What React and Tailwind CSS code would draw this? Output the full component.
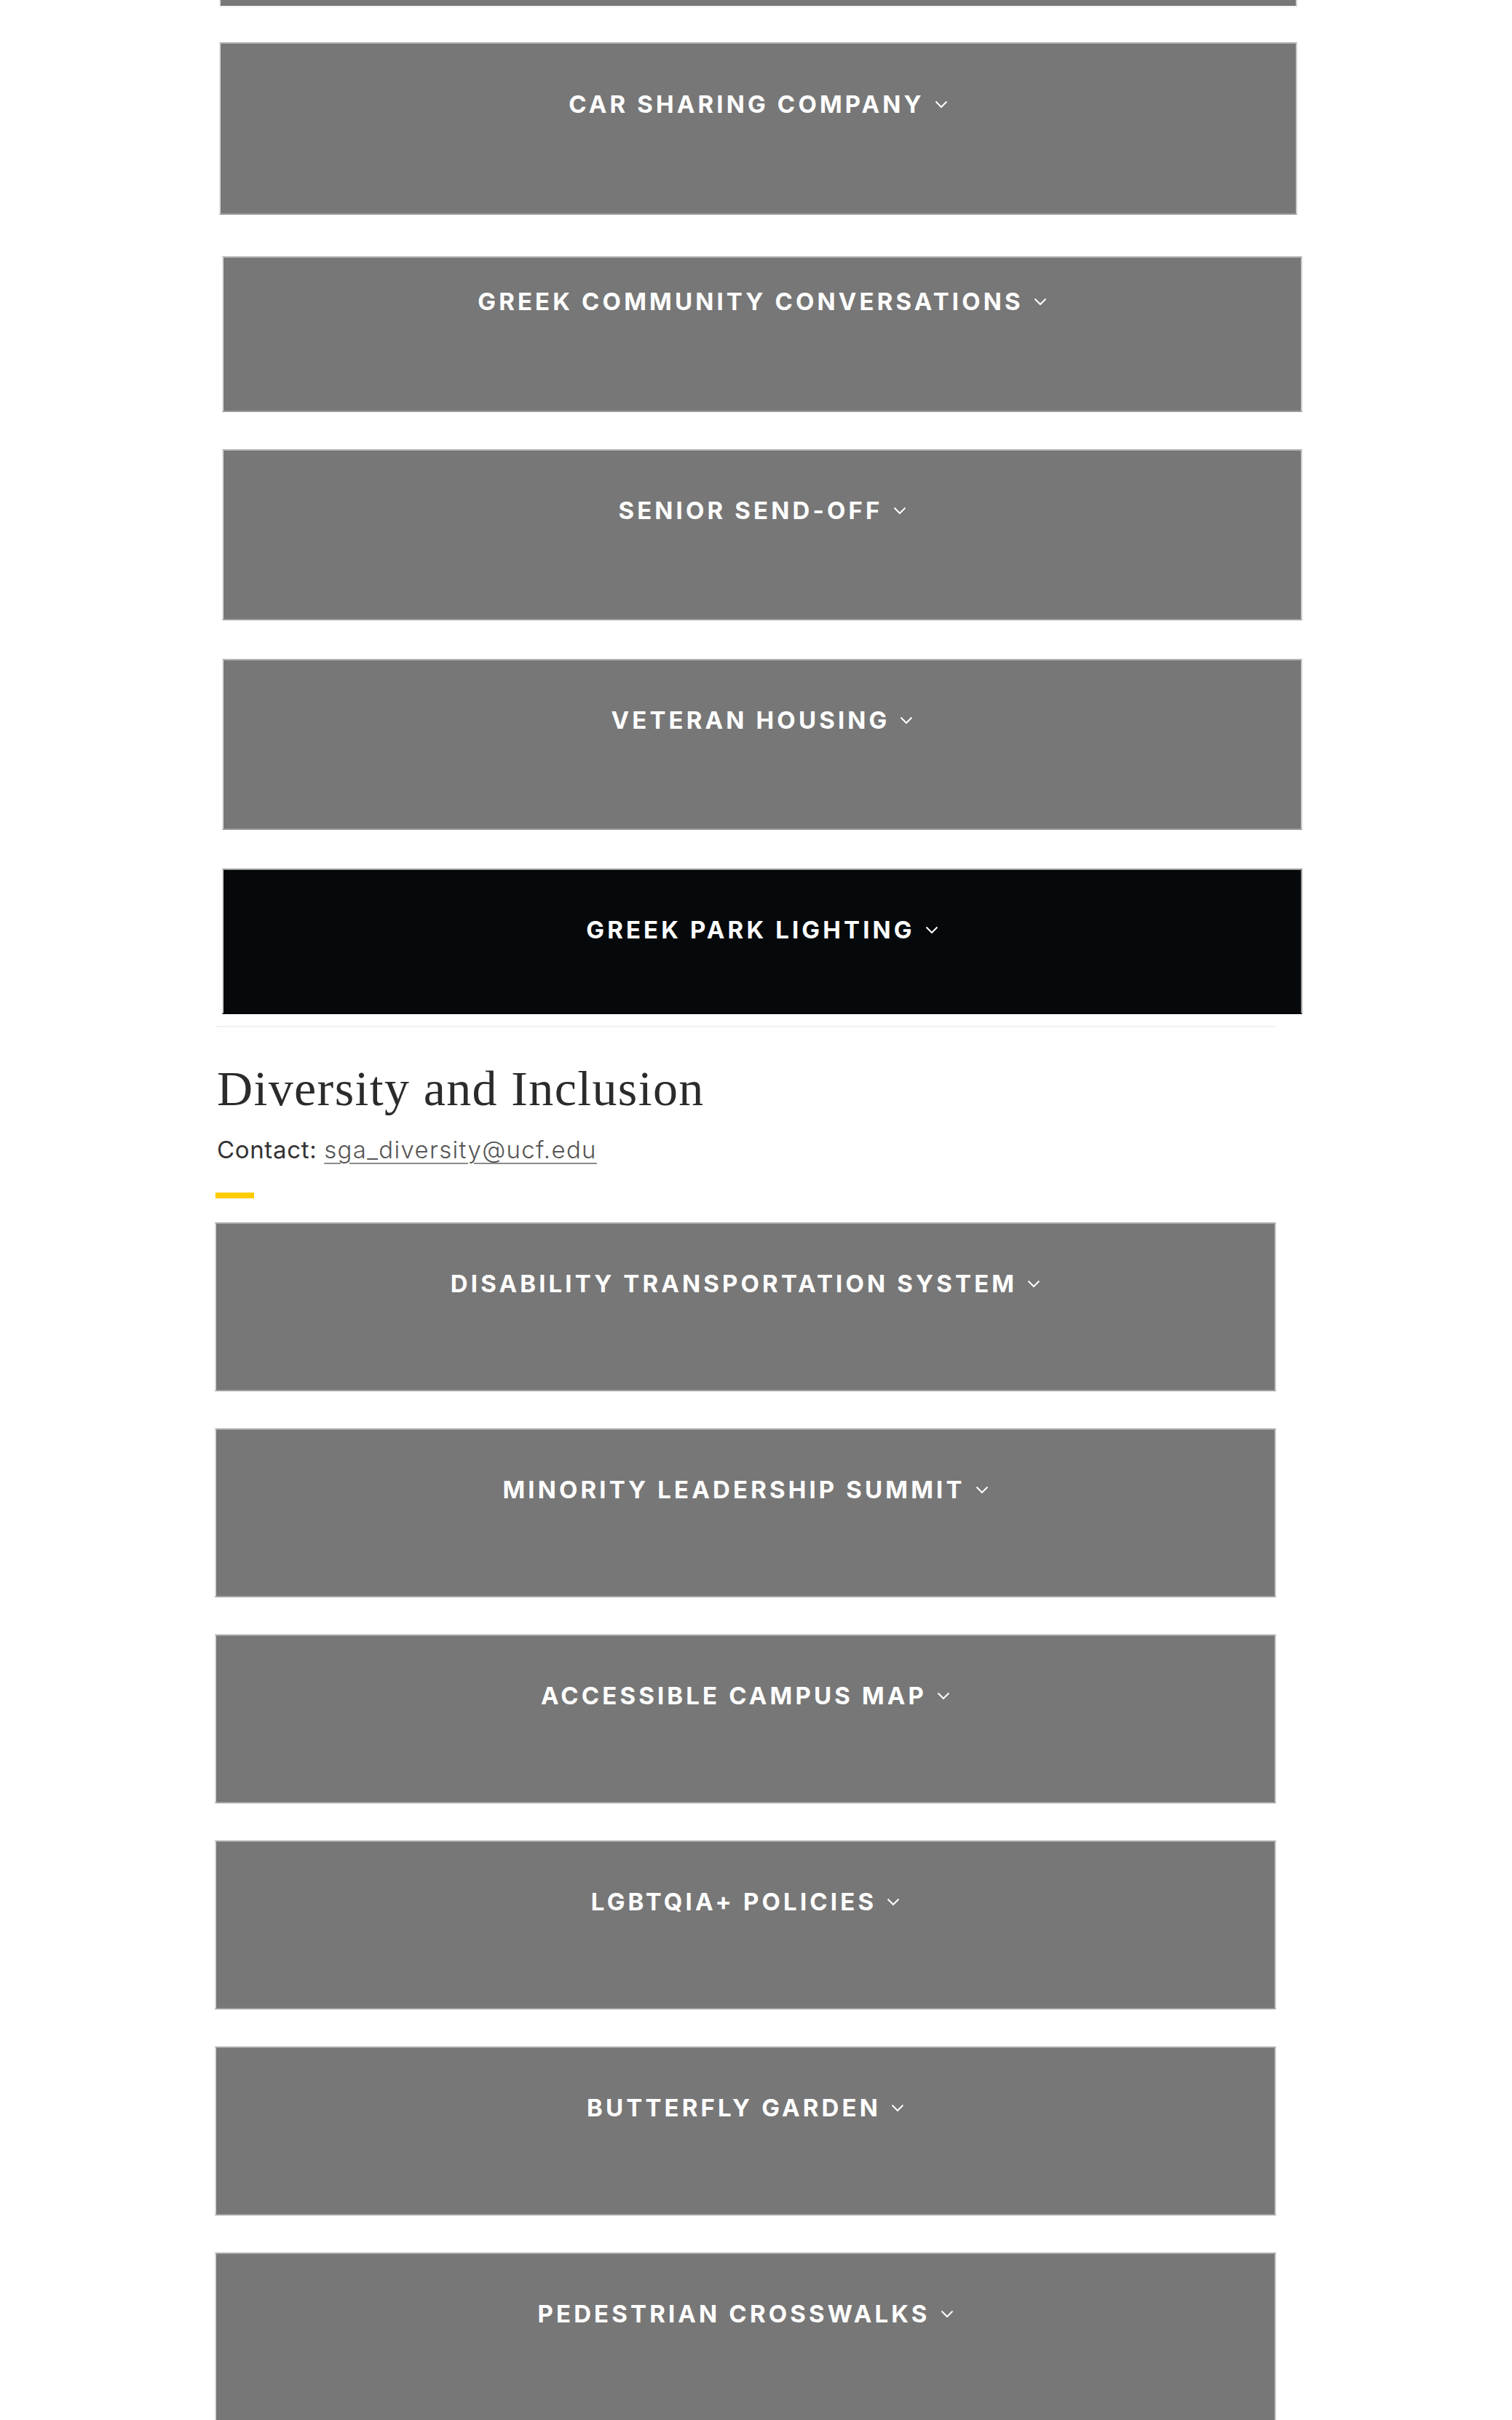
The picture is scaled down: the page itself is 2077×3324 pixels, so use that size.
import React from "react";

function Chevron() {
  return (
    <svg width="18" height="11" viewBox="0 0 18 11" className="ml-[14px] shrink-0">
      <polyline points="1.5,1.5 9,9 16.5,1.5" fill="none" stroke="white" strokeWidth="2" />
    </svg>
  );
}

function Label({ children }) {
  return (
    <div className="flex items-center justify-center">
      <span className="font-['Inter','Liberation_Sans',sans-serif] text-[33px] font-bold tracking-[0.125em] leading-[40px] text-white whitespace-nowrap">
        {children}
      </span>
      <Chevron />
    </div>
  );
}

const section2 = [
  "DISABILITY TRANSPORTATION SYSTEM",
  "MINORITY LEADERSHIP SUMMIT",
  "ACCESSIBLE CAMPUS MAP",
  "LGBTQIA+ POLICIES",
  "BUTTERFLY GARDEN",
  "PEDESTRIAN CROSSWALKS",
];

export default function App() {
  return (
    <div className="min-h-[3324px] w-[2077px] bg-white overflow-hidden">
      <div className="ml-[295px] w-[1458px] flex flex-col">
        {/* bottom of previous panel */}
        <div className="ml-[6px] w-[1481px] h-[10px] bg-[#777777] border-l-2 border-r-2 border-b-2 border-l-[#e6e6e6] border-r-[#d0d0d0] border-b-[#f4f4f4]" />

        <div className="mt-[48px] ml-[6px] w-[1481px] h-[237px] pt-[63px] bg-[#777777] border-2 border-t-[#b5b5b5] border-l-[#e2e2e2] border-r-[#cccccc] border-b-[#9c9c9c]">
          <Label>CAR SHARING COMPANY</Label>
        </div>

        <div className="mt-[57px] ml-[10px] w-[1484px] h-[214px] pt-[40px] bg-[#777777] border-2 border-t-[#b5b5b5] border-l-[#e2e2e2] border-r-[#cccccc] border-b-[#9c9c9c]">
          <Label>GREEK COMMUNITY CONVERSATIONS</Label>
        </div>

        <div className="mt-[51px] ml-[10px] w-[1484px] h-[235px] pt-[62px] bg-[#777777] border-2 border-t-[#b5b5b5] border-l-[#e2e2e2] border-r-[#cccccc] border-b-[#9c9c9c]">
          <Label>SENIOR SEND-OFF</Label>
        </div>

        <div className="mt-[53px] ml-[10px] w-[1484px] h-[235px] pt-[62px] bg-[#777777] border-2 border-t-[#b5b5b5] border-l-[#e2e2e2] border-r-[#cccccc] border-b-[#9c9c9c]">
          <Label>VETERAN HOUSING</Label>
        </div>

        <div className="mt-[53px] ml-[10px] w-[1484px] h-[200px] pt-[62px] bg-[#05090b] border-2 border-t-[#9c9c9c] border-l-[#d8d8d8] border-r-[#999999] border-b-[#05090b]">
          <Label>GREEK PARK LIGHTING</Label>
        </div>

        <div className="mt-[16px] ml-[1px] w-[1456px] h-[2px] bg-[#f0f0f0]" />

        <h2 className="mt-[43px] ml-[3px] font-['Liberation_Serif',serif] text-[68px] leading-[82px] tracking-[0.02em] text-[#2b2b2b] font-normal">
          Diversity and Inclusion
        </h2>

        <p className="mt-[18px] ml-[3px] font-['Inter','Liberation_Sans',sans-serif] text-[33px] leading-[50px] tracking-[0.02em] text-[#333333]">
          Contact:{" "}
          <a className="font-light tracking-[0.04em] text-[#555555] underline decoration-[#8a8a8a] decoration-2 underline-offset-[6px]">
            sga_diversity@ucf.edu
          </a>
        </p>

        <div className="mt-[34px] ml-[1px] w-[53px] h-[8px] bg-[#ffcc00]" />

        {section2.map((label, i) => (
          <div
            key={label}
            className={
              (i === 0 ? "mt-[33px] " : "mt-[51px] ") +
              "w-[1458px] h-[232px] shrink-0 pt-[62px] bg-[#777777] border-2 border-t-[#a9a9a9] border-l-[#dcdcdc] border-r-[#cccccc] border-b-[#a0a0a0]"
            }
          >
            <Label>{label}</Label>
          </div>
        ))}
      </div>
    </div>
  );
}
